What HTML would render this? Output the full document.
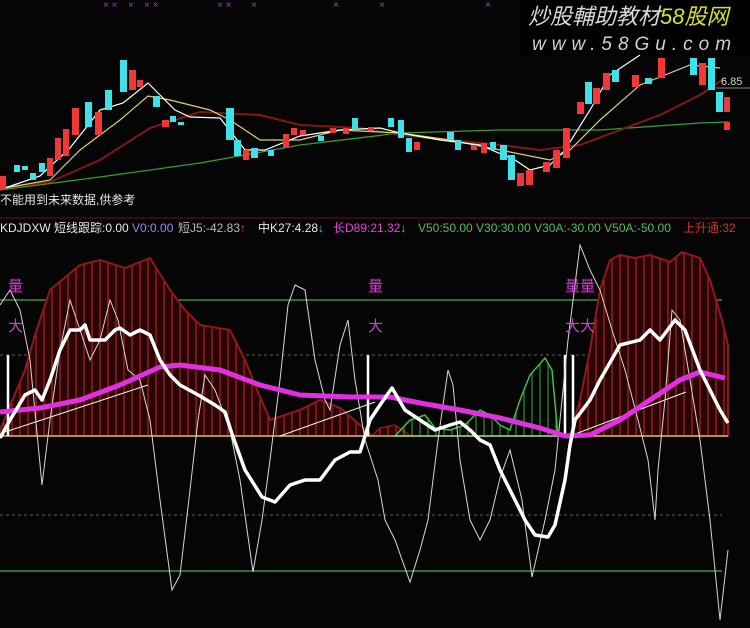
<!DOCTYPE html>
<html><head><meta charset="utf-8"><style>
body{margin:0;background:#000;}
svg{display:block}
text{font-family:"Liberation Sans","Noto Sans CJK SC",sans-serif;}
</style></head><body>
<svg width="750" height="628" viewBox="0 0 750 628" xmlns="http://www.w3.org/2000/svg">
<defs>
<pattern id="rh" patternUnits="userSpaceOnUse" width="8" height="10"><rect width="8" height="10" fill="#2a0404"/><line x1="4" y1="0" x2="4" y2="10" stroke="#c82828" stroke-width="1"/></pattern>
<pattern id="gh" patternUnits="userSpaceOnUse" width="8" height="10"><line x1="4" y1="0" x2="4" y2="10" stroke="#30b030" stroke-width="1"/></pattern>
</defs>
<rect width="750" height="628" fill="#050505"/>
<!-- watermark -->
<rect x="520" y="0" width="230" height="56" fill="#000"/>
<text x="528" y="24" font-size="22" font-style="italic" fill="#d8d8d8" font-family="'Noto Sans CJK SC',sans-serif">炒股輔助教材<tspan fill="#d8e020">58股网</tspan></text>
<text x="532" y="50" font-size="19" font-style="italic" fill="#d0d0d0" letter-spacing="6">www.58Gu.com</text>
<!-- top x marks -->
<g fill="#a040c0" font-size="10">
<text x="103" y="8">× ×</text><text x="128" y="8">×</text><text x="144" y="8">× ×</text>
<text x="217" y="8">× ×</text><text x="251" y="8">×</text><text x="333" y="8">×</text><text x="379" y="8">×</text><text x="485" y="8">×</text>
</g>
<!-- MAs -->
<polyline fill="none" stroke="#30a030" stroke-width="1.3" points="0,190 100,177 200,163 300,145 400,133 500,130 600,130 700,123 728,122"/>
<polyline fill="none" stroke="#801818" stroke-width="2" points="0,188 50,182 100,160 150,128 200,112 260,115 300,125 360,128 400,135 450,140 500,145 540,150 580,145 620,130 660,115 700,95 725,78"/>
<polyline fill="none" stroke="#e0d070" stroke-width="1.2" points="5,188 50,180 80,150 120,120 148,96 170,100 210,110 230,120 260,140 300,140 340,130 400,133 450,140 500,150 550,160 570,150 600,120 640,85 690,65 720,68"/>
<polyline fill="none" stroke="#ffffff" stroke-width="1.2" points="5,188 40,176 70,148 100,110 123,103 148,83 175,110 190,117 220,118 245,150 265,150 300,136 340,130 380,128 400,133 440,140 480,145 515,160 530,170 550,165 565,150 590,110 610,75 640,55"/>
<!-- candles -->
<g>
<rect x="0" y="176" width="6" height="14" fill="#f03838"/>
<rect x="14" y="165" width="6" height="7" fill="#40e0e8"/>
<rect x="22" y="166" width="6" height="4" fill="#40e0e8"/>
<rect x="30" y="173" width="6" height="7" fill="#40e0e8"/>
<rect x="39" y="163" width="6" height="9" fill="#40e0e8"/>
<rect x="47" y="158" width="6" height="18" fill="#f03838"/>
<rect x="55" y="138" width="6" height="22" fill="#f03838"/>
<rect x="63" y="129" width="6" height="27" fill="#f03838"/>
<rect x="72" y="108" width="7" height="27" fill="#f03838"/>
<rect x="85" y="102" width="7" height="25" fill="#40e0e8"/>
<rect x="95" y="112" width="7" height="23" fill="#f03838"/>
<rect x="105" y="90" width="7" height="20" fill="#40e0e8"/>
<rect x="120" y="60" width="7" height="32" fill="#40e0e8"/>
<rect x="129" y="70" width="7" height="20" fill="#f03838"/>
<rect x="137" y="80" width="6" height="7" fill="#f03838"/>
<rect x="153" y="96" width="7" height="11" fill="#40e0e8"/>
<rect x="162" y="120" width="7" height="7" fill="#f03838"/>
<rect x="170" y="116" width="6" height="6" fill="#40e0e8"/>
<rect x="178" y="122" width="6" height="3" fill="#40e0e8"/>
<rect x="226" y="108" width="8" height="32" fill="#40e0e8"/>
<rect x="234" y="140" width="7" height="16" fill="#40e0e8"/>
<rect x="243" y="150" width="6" height="10" fill="#f03838"/>
<rect x="251" y="148" width="7" height="10" fill="#40e0e8"/>
<rect x="268" y="150" width="6" height="6" fill="#40e0e8"/>
<rect x="283" y="134" width="6" height="14" fill="#f03838"/>
<rect x="291" y="128" width="6" height="7" fill="#f03838"/>
<rect x="300" y="130" width="6" height="5" fill="#f03838"/>
<rect x="318" y="136" width="6" height="5" fill="#40e0e8"/>
<rect x="330" y="128" width="6" height="5" fill="#f03838"/>
<rect x="343" y="128" width="6" height="6" fill="#f03838"/>
<rect x="352" y="118" width="6" height="12" fill="#40e0e8"/>
<rect x="368" y="127" width="6" height="4" fill="#f03838"/>
<rect x="388" y="118" width="6" height="9" fill="#40e0e8"/>
<rect x="398" y="120" width="6" height="18" fill="#40e0e8"/>
<rect x="406" y="138" width="6" height="14" fill="#40e0e8"/>
<rect x="414" y="142" width="6" height="8" fill="#f03838"/>
<rect x="447" y="132" width="7" height="8" fill="#40e0e8"/>
<rect x="455" y="140" width="6" height="10" fill="#40e0e8"/>
<rect x="471" y="145" width="6" height="5" fill="#f03838"/>
<rect x="481" y="143" width="6" height="10" fill="#f03838"/>
<rect x="490" y="142" width="6" height="8" fill="#40e0e8"/>
<rect x="500" y="145" width="7" height="15" fill="#40e0e8"/>
<rect x="508" y="155" width="7" height="25" fill="#40e0e8"/>
<rect x="517" y="173" width="7" height="13" fill="#f03838"/>
<rect x="526" y="170" width="7" height="15" fill="#f03838"/>
<rect x="543" y="162" width="7" height="10" fill="#f03838"/>
<rect x="553" y="150" width="7" height="18" fill="#f03838"/>
<rect x="563" y="128" width="7" height="30" fill="#f03838"/>
<rect x="577" y="102" width="7" height="12" fill="#f03838"/>
<rect x="585" y="82" width="7" height="22" fill="#40e0e8"/>
<rect x="593" y="88" width="7" height="16" fill="#f03838"/>
<rect x="603" y="73" width="7" height="17" fill="#f03838"/>
<rect x="612" y="70" width="7" height="12" fill="#40e0e8"/>
<rect x="632" y="75" width="7" height="12" fill="#f03838"/>
<rect x="645" y="78" width="7" height="6" fill="#40e0e8"/>
<rect x="658" y="58" width="7" height="20" fill="#f03838"/>
<rect x="690" y="58" width="7" height="17" fill="#40e0e8"/>
<rect x="699" y="63" width="7" height="22" fill="#f03838"/>
<rect x="708" y="58" width="7" height="32" fill="#40e0e8"/>
<rect x="716" y="92" width="7" height="20" fill="#40e0e8"/>
<rect x="724" y="97" width="6" height="15" fill="#f03838"/>
<rect x="724" y="122" width="6" height="8" fill="#f03838"/>
</g>
<text x="721" y="85" font-size="11" fill="#d0d0d0">6.85</text>
<line x1="716" y1="88" x2="750" y2="88" stroke="#888" stroke-width="1"/>
<text x="0" y="204" font-size="12" fill="#e8e8e8">不能用到未来数据,供参考</text>
<!-- divider -->
<line x1="0" y1="218" x2="750" y2="218" stroke="#6a1020" stroke-width="1"/>
<!-- header -->
<g font-size="12">
<text x="0" y="232" fill="#e8e8e8">KDJDXW 短线跟踪:0.00</text>
<text x="132" y="232" fill="#8c8cff">V0:0.00</text>
<text x="178" y="232" fill="#bbbbbb">短J5:-42.83<tspan fill="#e05050">↑</tspan></text>
<text x="258" y="232" fill="#e8e8e8">中K27:4.28<tspan fill="#40d0e0">↓</tspan></text>
<text x="333" y="232" fill="#e040e0">长D89:21.32<tspan fill="#40d0e0">↓</tspan></text>
<text x="418" y="232" fill="#50c050">V50:50.00 V30:30.00 V30A:-30.00 V50A:-50.00</text>
<text x="683" y="232" fill="#d03030">上升通:32</text>
</g>
<!-- lower panel -->
<line x1="0" y1="300" x2="722" y2="300" stroke="#60d060" stroke-width="1"/>
<line x1="0" y1="355" x2="722" y2="355" stroke="#606060" stroke-width="1" stroke-dasharray="3,3"/>
<line x1="0" y1="515" x2="722" y2="515" stroke="#606060" stroke-width="1" stroke-dasharray="3,3"/>
<line x1="0" y1="571" x2="722" y2="571" stroke="#60d060" stroke-width="1"/>
<polygon fill="url(#rh)" stroke="#901818" stroke-width="2" points="0,436 0,430 25,370 35,335 50,290 80,265 100,260 125,268 150,258 170,290 185,310 200,325 230,330 245,360 255,385 270,420 300,410 320,400 340,408 360,425 372,436"/>
<polygon fill="url(#rh)" stroke="#901818" stroke-width="1.5" points="372,436 380,428 395,425 405,432 410,436"/>
<polygon fill="url(#gh)" stroke="#40c040" stroke-width="1.5" points="395,436 410,420 425,415 435,428 450,430 465,425 480,410 490,415 500,425 510,430 520,400 530,375 545,358 552,370 558,436"/>
<polygon fill="url(#rh)" stroke="#901818" stroke-width="2" points="570,436 580,400 590,350 600,290 610,260 620,255 635,258 650,255 670,262 682,252 700,258 710,280 722,320 728,345 728,436"/>
<line x1="0" y1="436" x2="728" y2="436" stroke="#c8d870" stroke-width="1.2"/>
<!-- white bars -->
<g stroke="#fff" stroke-width="2.5"><line x1="8" y1="355" x2="8" y2="436"/><line x1="368" y1="355" x2="368" y2="436"/><line x1="565" y1="355" x2="565" y2="436"/><line x1="573" y1="355" x2="573" y2="436"/></g>
<!-- thin diag -->
<g stroke="#f0f0f0" stroke-width="1"><line x1="5" y1="432" x2="148" y2="385"/><line x1="280" y1="436" x2="375" y2="402"/><line x1="570" y1="436" x2="686" y2="392"/></g>
<!-- thin oscillator -->
<polyline fill="none" stroke="#d8d8d8" stroke-width="1" points="0,305 10,290 20,310 30,360 42,485 50,420 60,350 70,300 80,330 90,360 100,340 110,300 118,320 128,370 140,380 150,420 160,500 172,590 180,575 190,490 198,420 205,375 215,390 230,430 240,480 253,572 262,520 270,460 280,380 288,305 295,285 305,290 315,360 325,400 330,410 340,345 348,320 355,380 365,440 378,480 385,520 395,540 410,582 420,550 428,520 438,440 448,370 453,385 460,460 470,520 480,540 490,520 500,478 510,450 522,500 532,577 545,520 555,470 568,340 580,245 590,270 600,290 612,330 625,370 638,420 648,460 655,520 658,470 665,400 672,310 680,320 690,380 700,440 710,520 720,620 728,550"/>
<!-- magenta -->
<polyline fill="none" stroke="#e030e0" stroke-width="5" stroke-linejoin="round" points="0,412 40,408 80,400 120,385 160,367 180,365 220,370 260,385 300,395 350,397 390,397 420,403 460,410 500,418 540,428 565,436 590,435 620,420 650,400 680,380 700,372 725,378"/>
<!-- white thick -->
<polyline fill="none" stroke="#ffffff" stroke-width="3.5" stroke-linejoin="round" points="0,438 10,420 25,395 35,390 42,400 50,380 60,350 70,330 80,330 85,325 90,340 105,340 115,330 120,328 130,335 140,330 150,335 160,360 170,375 180,385 200,396 215,405 225,412 232,434 245,470 262,497 275,502 290,485 305,480 320,480 335,460 350,452 360,452 370,420 380,405 392,388 405,410 420,420 435,430 450,425 460,422 470,430 480,440 490,445 500,470 510,490 525,520 535,535 548,537 555,525 565,480 570,445 575,420 590,400 600,380 620,345 640,340 650,330 660,340 675,320 685,330 700,370 710,390 720,410 728,423"/>
<!-- labels -->
<g fill="#d040d0" font-size="15" font-family="'Noto Sans CJK SC',sans-serif">
<text x="8" y="291">量</text><text x="368" y="291">量</text><text x="565" y="291">量量</text>
<text x="8" y="331">大</text><text x="368" y="331">大</text><text x="565" y="331">大大</text>
</g>
</svg>
</body></html>
